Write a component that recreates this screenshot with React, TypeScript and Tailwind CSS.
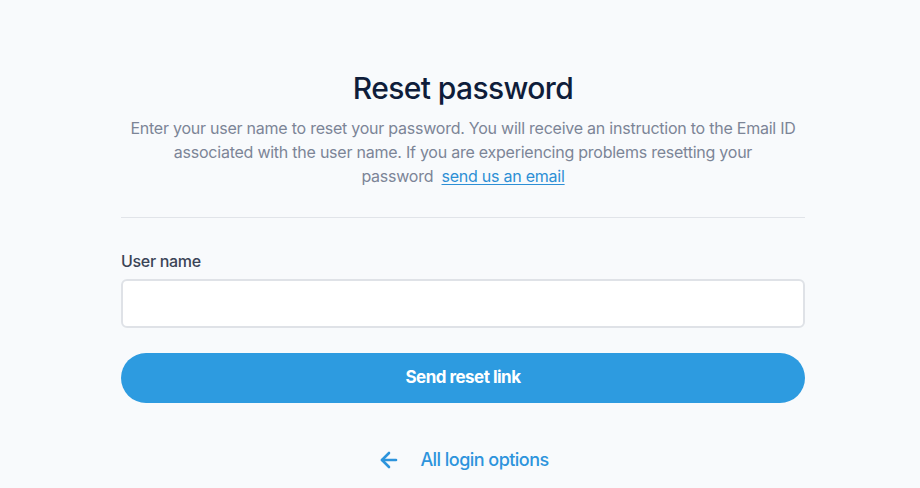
import { ArrowLeft } from 'lucide-react'

const font = { fontFamily: 'Inter, "Noto Sans", sans-serif' }

export default function App() {
  return (
    <div className="min-h-[488px] w-full bg-[#f8fafc]" style={font}>
      <div className="flex justify-center pl-[6px] pt-[68px]">
        <div className="flex w-[684px] flex-col">
          <h1 className="text-center text-[30px] font-medium leading-[40px] tracking-[-0.02em] text-[#0f1d3a]">
            Reset password
          </h1>
          <p className="mt-[8px] whitespace-nowrap text-center text-[16px] leading-[24px] tracking-[-0.015em] text-[#7c8597]">
            Enter your user name to reset your password. You will receive an instruction to the Email ID
            <br />
            associated with the user name. If you are experiencing problems resetting your
            <br />
            password{' '}
            <a href="#" className="ml-[4px] text-[#2d8fd5] underline underline-offset-2">
              send us an email
            </a>
          </p>
          <div className="mt-[29px] h-px w-full bg-[#e1e4e9]" />
          <label className="mt-[31px] text-[16px] font-medium leading-[24px] tracking-[-0.02em] text-[#3b4456]">
            User name
          </label>
          <input
            type="text"
            className="mt-[6px] h-[49px] w-full rounded-[6px] border-2 border-[#dfe2e7] bg-white px-3 outline-none"
          />
          <button className="mt-[25px] h-[50px] w-full rounded-full bg-[#2d9be0] text-[17px] font-bold tracking-[-0.03em] text-white">
            Send reset link
          </button>
          <a href="#" className="mt-[43px] flex items-center justify-center gap-[19px] text-[18px] font-medium tracking-[-0.03em] text-[#2d94dc]">
            <ArrowLeft size={24} strokeWidth={2.6} />
            All login options
          </a>
        </div>
      </div>
    </div>
  )
}
